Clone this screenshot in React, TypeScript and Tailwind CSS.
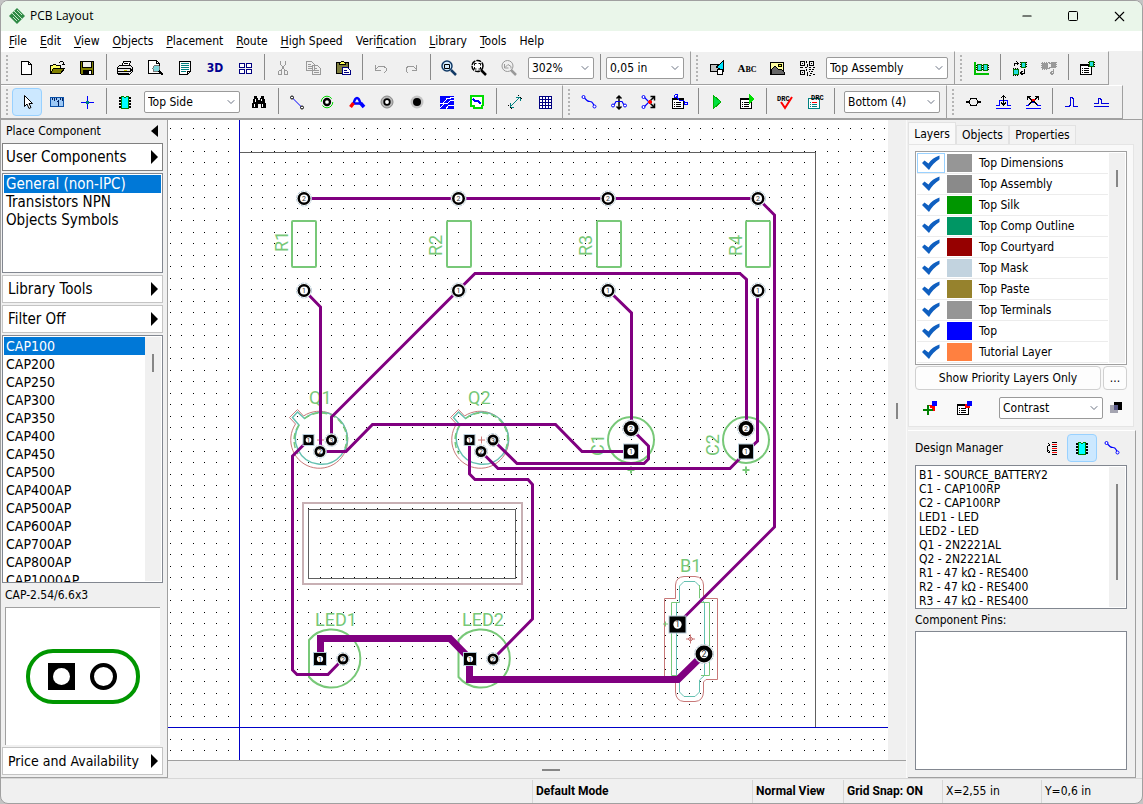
import { useState } from "react";
import type { ReactNode } from "react";
import { Minus, Square, X, ChevronDown } from "lucide-react";

const uiFont = "font-['DejaVu_Sans_Condensed','Noto_Sans',sans-serif]";

/* ---------- icons ---------- */

function Ico({ children, soft }: { children: ReactNode; soft?: boolean }) {
  return (
    <svg
      viewBox="0 0 18 18"
      className="w-[18px] h-[18px] shrink-0"
      fill="none"
      stroke="#000"
      shapeRendering={soft ? "auto" : "crispEdges"}
      aria-hidden="true"
    >
      {children}
    </svg>
  );
}

const icons: Record<string, ReactNode> = {
  new: (
    <Ico>
      <path d="M3.5 2.5h7l3 3v10h-10z" fill="#fff" />
      <path d="M10.5 2.5v3h3" />
    </Ico>
  ),
  open: (
    <Ico>
      <path d="M2.5 14.5v-8h2l1-1h2l1 1h4v3" fill="#ffff66" />
      <path d="M2.5 14.5l3-5h11l-4 5z" fill="#808000" />
      <path d="M10.5 3.5h1l1-1h2l1 1v2M13.5 5.5h3" />
    </Ico>
  ),
  save: (
    <Ico>
      <path d="M2.5 2.5h13v13h-12l-1-1z" fill="#808000" />
      <path d="M4.5 2.5h9v6h-9z" fill="#efefef" />
      <path d="M5 11h8v4H5z" fill="#000" />
      <path d="M11 12h1v2h-1z" stroke="#fff" />
    </Ico>
  ),
  print: (
    <Ico>
      <path d="M5.5 7.5l2-5h7l-2 5z" fill="#fff" />
      <path d="M1.5 8.5l2-2h11l2 2v4l-3 3h-11l-1-2z" fill="#e8e8e8" />
      <path d="M8 4.5h4M7 6.5h4M2 9.5h12M2 12.5h12l2-2M3 14.5h10M14.5 9v4" />
      <path d="M8 11h3" stroke="#cccc00" />
    </Ico>
  ),
  preview: (
    <Ico>
      <path d="M2.5 1.5h8l3 3v10h-11z" fill="#fff" />
      <path d="M10.5 1.5v3h3" />
      <circle cx="10.5" cy="9.5" r="3.5" fill="#7fd6dc" stroke="#777" />
      <path d="M13 12l4 4" strokeWidth="2" />
    </Ico>
  ),
  report: (
    <Ico>
      <path d="M3.5 2.5h11v10l-3 3h-8z" fill="#fff" />
      <path d="M5 4.5h8M5 6.5h8M5 8.5h8M5 10.5h8" stroke="#008080" />
      <path d="M5 12.5h5" stroke="#008080" />
      <path d="M11.5 15.5v-3h3" />
    </Ico>
  ),
  panels: (
    <Ico>
      <path d="M3.5 4.5h5v4h-5zM10.5 4.5h5v4h-5zM3.5 10.5h5v4h-5zM10.5 10.5h5v4h-5z" fill="#fff" stroke="#000080" />
    </Ico>
  ),
  cut: (
    <Ico>
      <path d="M6.5 2v3l4 6M11.5 2v3l-4 6" stroke="#999" />
      <path d="M5.5 11.5h2v4h-3v-3zM10.5 11.5h2l1 1v3h-3z" stroke="#999" />
    </Ico>
  ),
  copy: (
    <Ico>
      <path d="M2.5 2.5h5l3 3v6h-8zM8.5 6.5h5l3 3v6h-8z" fill="#efefef" stroke="#999" />
      <path d="M4 5.5h3M4 7.5h4M4 9.5h4M10 9.5h3M10 11.5h5M10 13.5h5" stroke="#999" />
    </Ico>
  ),
  paste: (
    <Ico>
      <path d="M2.5 3.5h12v11h-12z" fill="#7d7d3c" />
      <path d="M5.5 4.5l2-2h2l2 2v1h-6z" fill="#ffff55" />
      <path d="M8.5 8.5h5l3 3v4h-8z" fill="#fff" stroke="#000080" />
      <path d="M10 11.5h3M10 13.5h5" stroke="#000080" />
    </Ico>
  ),
  undo: (
    <Ico>
      <path d="M3.5 6v5h5M4 10l3-3h4l3 2v3l-2 2" stroke="#999" />
    </Ico>
  ),
  redo: (
    <Ico>
      <path d="M14.5 6v5h-5M14 10l-3-3H7L4 9v3l2 2" stroke="#999" />
    </Ico>
  ),
  zoomWin: (
    <Ico soft>
      <circle cx="7" cy="7" r="5" fill="#d4ecff" stroke="#123a66" strokeWidth="1.5" />
      <path d="M4.5 5.5h5v4h-5z" />
      <path d="M11 11l5 5" stroke="#123a66" strokeWidth="2.5" />
    </Ico>
  ),
  zoomFit: (
    <Ico soft>
      <circle cx="7.5" cy="7" r="5.5" strokeDasharray="5 1" fill="#fff" strokeWidth="1.5" />
      <path d="M4.5 6.5v-2h2M8.5 4.5h2v2M10.5 8v2h-2M6.5 10h-2V8" />
      <path d="M11 11l5 5" strokeWidth="2.5" />
    </Ico>
  ),
  zoomPrev: (
    <Ico soft>
      <circle cx="7.5" cy="7" r="5.5" stroke="#999" />
      <path d="M4.5 5v4h4M5 8.5l3-3 3 2v2" stroke="#999" />
      <path d="M11 11l5 5" stroke="#999" strokeWidth="2.5" />
    </Ico>
  ),
  shapes: (
    <Ico>
      <path d="M2.5 5.5h9v7h-9z" fill="#c0c0c0" />
      <path d="M15.5 2v10l-7-4z" fill="#00e5ff" />
      <circle cx="12" cy="13" r="3" fill="#fff" />
    </Ico>
  ),
  picture: (
    <Ico>
      <path d="M2.5 3.5h13v12h-13z" fill="#ffffa0" />
      <circle cx="12" cy="6.5" r="1.5" fill="#ffff00" />
      <path d="M3 15v-4l4-4 4 4 2-1 3 3v2z" fill="#666" />
    </Ico>
  ),
  qr: (
    <Ico>
      <path d="M2.5 2.5h4v4h-4zM11.5 2.5h4v4h-4zM2.5 11.5h4v4h-4z" />
      <path d="M4 4.5h1M13 4.5h1M4 13.5h1M8.5 2v2M9.5 5v3M2 8.5h3M7 8.5h2M11 8.5h2M15 8.5h2M8.5 10v2M9.5 13v4M11 10.5h2M14 10.5h2M11 12.5h1M13 12.5h2M12 14.5h2M11 16.5h2M15 15.5h2" />
    </Ico>
  ),
  placeAxis: (
    <Ico>
      <path d="M3 3v12h14" stroke="#00c000" strokeWidth="2" />
      <path d="M5.5 5.5h4v6h-4zM11.5 5.5h4v6h-4z" fill="#20e0e0" stroke="#008000" />
      <path d="M4.5 6v6M10.5 6v6M16.5 6v6" strokeDasharray="1 1" />
    </Ico>
  ),
  swap: (
    <Ico>
      <path d="M11.5 3.5h4v5h-4zM3.5 10.5h5v5h-5z" fill="#20e0e0" stroke="#007000" />
      <path d="M10.5 3v6M16.5 3v6M3 9.5h6M3 16.5h6" strokeDasharray="1 1" />
      <path d="M4.5 7V4.5H8M6.5 2.5l2 2-2 2M14.5 10v4H11M12.5 12l-2 2 2 2" />
    </Ico>
  ),
  swapOff: (
    <Ico>
      <path d="M2.5 4.5h5v5h-5zM11.5 3.5h4v5h-4z" fill="#999" stroke="#999" />
      <path d="M1.5 4v6M2 3.5h6M2 10.5h6M16.5 3v6" stroke="#999" strokeDasharray="1 1" />
      <path d="M8.5 3l2 2M8.5 10l2-2M13.5 10v4H11M12.5 12l-2 2 2 2" stroke="#999" />
    </Ico>
  ),
  listChip: (
    <Ico>
      <path d="M2.5 5.5h11v10h-11z" fill="#fff" />
      <path d="M2 6h11" strokeWidth="2" />
      <path d="M4 9.5h1M6 9.5h5M4 11.5h1M6 11.5h5M4 13.5h1M6 13.5h5" />
      <path d="M11.5 2.5h4v5h-4z" fill="#20e0e0" stroke="#007000" />
      <path d="M10.5 3v5M16.5 3v5" strokeDasharray="1 1" />
    </Ico>
  ),
  cursor: (
    <Ico soft>
      <path d="M6.5 2.5v11l2.5-2.5 2 4.5 2-1-2-4h3.5z" fill="#fff" />
    </Ico>
  ),
  measure: (
    <Ico>
      <path d="M2.5 4.5h13v9h-13z" fill="#9cc8f5" stroke="#0a50a8" />
      <path d="M4.5 5v2M6.5 5v3M8.5 5v2M12.5 5v2M14.5 5v3M9.5 9l1-1v5" stroke="#002060" />
    </Ico>
  ),
  origin: (
    <Ico>
      <path d="M9.5 3v13M3 9.5h13" stroke="#0000ff" />
      <path d="M8 8h3v3H8z" fill="#008080" stroke="none" />
    </Ico>
  ),
  chip: (
    <Ico>
      <path d="M3 5h12M3 8h12M3 11h12M3 14h12" strokeWidth="2" />
      <path d="M5.5 3.5h2l1 1h1l1-1h2v12h-7z" fill="#00ffff" stroke="#008000" />
    </Ico>
  ),
  find: (
    <Ico>
      <path d="M4 3h3v2h1v2h2V5h1V3h3v3h1v3l1 2v4h-5v-4H8v4H2v-4l1-2V6h1z" fill="#000" stroke="none" />
      <path d="M4.5 11v3M5.5 6v3M12.5 11v3M11.5 6v2" stroke="#fff" />
    </Ico>
  ),
  trace: (
    <Ico soft>
      <path d="M4 4.5l10 10" stroke="#0000ff" />
      <circle cx="4" cy="4.5" r="1.5" fill="#fff" />
      <circle cx="14" cy="14.5" r="1.5" fill="#fff" />
    </Ico>
  ),
  viaGreen: (
    <Ico soft>
      <circle cx="9" cy="9" r="5.8" stroke="#00d800" strokeDasharray="14 4" />
      <circle cx="9" cy="9" r="3" fill="#fff" strokeWidth="2.3" />
    </Ico>
  ),
  arc: (
    <Ico soft>
      <path d="M5.5 10.5Q7 5 9 5t3.5 5.5M6 10.5h6" stroke="#0000ff" strokeWidth="2.5" />
      <path d="M5.5 10l-3 4" stroke="#ff0000" strokeWidth="3.5" />
      <path d="M12.5 10l3.5 4" stroke="#0000ff" strokeWidth="3.5" />
    </Ico>
  ),
  viaGray: (
    <Ico soft>
      <circle cx="9" cy="9" r="6" fill="#b8b8b8" stroke="#888" />
      <circle cx="9" cy="9" r="2.8" fill="#fff" strokeWidth="1.8" />
    </Ico>
  ),
  viaSolid: (
    <Ico soft>
      <circle cx="9" cy="9" r="6.5" fill="#c4c4c4" stroke="none" />
      <circle cx="9" cy="9" r="4" fill="#000" stroke="none" />
    </Ico>
  ),
  pour: (
    <Ico>
      <path d="M2 3h14v13H2z" fill="#0000ff" stroke="none" />
      <path d="M2 10.5h3l4-5h3l1-1h3M2 15l5-5h3l3-3h3M8 16l3-4h5" stroke="#fff" />
    </Ico>
  ),
  region: (
    <Ico>
      <path d="M3 3h12v9l-1 1v2H6v-2H3z" fill="#fff" stroke="#00dd00" strokeWidth="2" />
      <path d="M5 6l2 2h3l3 3" stroke="#0000ff" strokeWidth="2" />
    </Ico>
  ),
  dimension: (
    <Ico>
      <path d="M4 14L14 4M4 10v4h4M10 4h4v4" stroke="#008080" />
      <path d="M2 12l4 4M12 2l4 4" strokeDasharray="2 1" />
    </Ico>
  ),
  table: (
    <Ico>
      <path d="M3 3h13v13H3z" fill="#fff" stroke="none" />
      <path d="M3 3.5h13M3 6.5h13M3 9.5h13M3 12.5h13M3 15.5h13M3.5 3v13M6.5 3v13M9.5 3v13M12.5 3v13M15.5 3v13" stroke="#000080" />
    </Ico>
  ),
  net: (
    <Ico soft>
      <path d="M4.5 5L7 7.5q1 1 3 1t3 2l1 2" stroke="#0000ff" strokeWidth="1.2" />
      <circle cx="3.5" cy="4" r="1.5" stroke="#0000ff" fill="#fff" />
      <circle cx="14.5" cy="13.5" r="1.5" stroke="#0000ff" fill="#fff" />
    </Ico>
  ),
  netUp: (
    <Ico soft>
      <path d="M9 3v13M6.5 5.5L9 3l2.5 2.5M6.5 13.5L9 16l2.5-2.5" strokeWidth="1.5" />
      <path d="M4 12l2-3.5h6l2 3.5" stroke="#0000ff" strokeWidth="1.2" />
      <circle cx="3" cy="12.5" r="1.5" stroke="#0000ff" fill="#fff" />
      <circle cx="15" cy="12.5" r="1.5" stroke="#0000ff" fill="#fff" />
    </Ico>
  ),
  netCut: (
    <Ico soft>
      <path d="M9 9l5 5M9 9l5-5M10.5 3.5h4v4M10.5 14.5h4v-4" strokeWidth="1.5" />
      <path d="M4 4l5 5-5 5" stroke="#0000ff" strokeWidth="1.2" />
      <path d="M8 9h4M10 7v4" stroke="#ff0000" strokeWidth="2" />
      <circle cx="3.5" cy="4" r="1.5" stroke="#0000ff" fill="#fff" />
      <circle cx="3.5" cy="14" r="1.5" stroke="#0000ff" fill="#fff" />
    </Ico>
  ),
  netList: (
    <Ico>
      <path d="M2.5 5.5h11v10h-11z" fill="#fff" />
      <path d="M2 6h11" strokeWidth="2" />
      <path d="M4 9.5h1M6 9.5h5M4 11.5h1M6 11.5h5M4 13.5h1M6 13.5h5" />
      <path d="M6 3l3 4h4l3 3" stroke="#0000ff" />
      <circle cx="6" cy="3" r="1.5" stroke="#0000ff" />
      <circle cx="16" cy="10.5" r="1.5" stroke="#0000ff" />
    </Ico>
  ),
  run: (
    <Ico>
      <path d="M5 2l8 7-8 7z" fill="#00e040" stroke="#00b000" />
    </Ico>
  ),
  runList: (
    <Ico>
      <path d="M2.5 5.5h11v10h-11z" fill="#fff" />
      <path d="M2 6h11" strokeWidth="2" />
      <path d="M4 9.5h1M6 9.5h5M4 11.5h1M6 11.5h5M4 13.5h1M6 13.5h5" />
      <path d="M11 1l6 5-6 5z" fill="#00e000" stroke="none" />
    </Ico>
  ),
  drc: (
    <Ico soft>
      <text x="1" y="8" fontSize="7" fontWeight="700" fontFamily="Liberation Mono, monospace" fill="#000" stroke="none">DRC</text>
      <path d="M5 9l4 6 7-11" stroke="#ff0000" strokeWidth="2" />
    </Ico>
  ),
  drcList: (
    <Ico>
      <path d="M2.5 5.5h11v10h-11z" fill="#fff" stroke="#008080" />
      <path d="M4 9.5h1M4 11.5h1M6 11.5h5M4 13.5h1M6 13.5h5" stroke="#008080" />
      <path d="M6 9.5h5" stroke="#ff0000" />
      <text x="5" y="7" fontSize="7" fontWeight="700" fontFamily="Liberation Mono, monospace" fill="#000" stroke="none">DRC</text>
    </Ico>
  ),
  pair: (
    <Ico>
      <path d="M2 8.5h3l2-3h5l2 3h3M2 9.5h3l2 3h5l2-3h3" />
    </Ico>
  ),
  pairUp: (
    <Ico>
      <path d="M2 12.5h3v-5h8v5h4M2 15.5h15" stroke="#0000ff" />
      <path d="M9.5 2v10M7 5l2.5-2.5L12 5M7 9.5l2.5 2.5 2.5-2.5" />
    </Ico>
  ),
  pairCut: (
    <Ico>
      <path d="M2 12.5h2l5-4 5 4h3M2 15.5h15" stroke="#0000ff" />
      <path d="M4 4l9 7M14 4l-9 7M3.5 7V3.5H7M11 3.5h3.5V7" strokeWidth="1.5" />
      <path d="M8 7h3" stroke="#ff0000" strokeWidth="2" />
    </Ico>
  ),
  tune: (
    <Ico>
      <path d="M3 13.5h4l1-1V5.5l1-1h1l1 1v7l1 1h4" stroke="#0000e0" />
    </Ico>
  ),
  tunePair: (
    <Ico>
      <path d="M2 10.5h4V6.5l1-1h1l1 1v3l1 1h7M2 13.5h15" stroke="#0000e0" />
    </Ico>
  ),
  plusLayer: (
    <Ico>
      <path d="M8 6h6v6H8z" fill="#ff0000" stroke="none" />
      <path d="M11 2h5v5h-5z" fill="#0000ff" stroke="none" />
      <path d="M7 7v8M3 11h8" stroke="#f9f9f9" strokeWidth="4" />
      <path d="M7 6v10M2 11h10" stroke="#008000" strokeWidth="2" />
    </Ico>
  ),
  layerList: (
    <Ico>
      <path d="M2.5 5.5h11v10h-11z" fill="#fff" />
      <path d="M2 6h8" strokeWidth="2" />
      <path d="M4 9.5h1M6 9.5h5M4 11.5h1M6 11.5h5M4 13.5h1M6 13.5h5" />
      <path d="M10 5h5v4h-5z" fill="#ff0000" stroke="none" />
      <path d="M12 2h5v5h-5z" fill="#0000ff" stroke="none" />
    </Ico>
  ),
  overlay: (
    <Ico>
      <path d="M8 3h8v8H8z" fill="#000" stroke="none" />
      <path d="M4 6h8v8H4z" fill="#a4a4b0" stroke="none" />
      <path d="M8 6h4v5H8z" fill="#5a5a8a" stroke="none" />
    </Ico>
  ),
  refresh: (
    <Ico>
      <path d="M9 3.5h5M9 7.5h5M9 11.5h5M9 15.5h5" />
      <path d="M9 5.5h5M9 9.5h5M9 13.5h5" stroke="#ff0000" />
      <path d="M7 6.5H5.5L4.500 8v4L5.500 13.5H7M5.500 4.500l2 2M5.500 11.500l2 2" />
    </Ico>
  ),
};

/* ---------- toolbar parts ---------- */

function Tool({ name, active }: { name: string; active?: boolean }) {
  return (
    <button
      aria-label={name}
      className={`w-[30px] h-7 shrink-0 flex items-center justify-center rounded-sm ${
        active ? "bg-[#cce8ff] border border-[#99d1ff]" : "hover:bg-[#e0eef9]"
      }`}
    >
      {name === "3D" ? (
        <span className="text-[12px] leading-4 font-bold text-[#000090]">3D</span>
      ) : name === "Abc" ? (
        <span className="text-[11px] leading-4 font-bold font-['Liberation_Serif',serif] [font-variant:small-caps]">Abc</span>
      ) : (
        icons[name]
      )}
    </button>
  );
}

function Sep() {
  return (
    <div className="w-2 h-7 shrink-0 flex justify-center">
      <div className="w-px h-[26px] bg-[#8a8a8a]" />
    </div>
  );
}

function Combo({ label, options, className }: { label: string; options: string[]; className: string }) {
  return (
    <div className={`relative shrink-0 h-[22px] ${className}`}>
      <select
        aria-label={label}
        className="block appearance-none w-full h-full bg-white border border-[#9a9a9a] rounded-xs pl-[3px] text-[12px] leading-4 outline-none"
      >
        {options.map((o) => (
          <option key={o}>{o}</option>
        ))}
      </select>
      <ChevronDown size={12} strokeWidth={2} className="absolute right-[3px] top-[5px] text-gray-500 pointer-events-none" />
    </div>
  );
}

function Strip({ children, tight }: { children: ReactNode; tight?: boolean }) {
  return (
    <div
      className={`flex items-center shrink-0 h-[34px] border-t border-t-white border-r border-r-[#a0a0a0] border-b border-b-[#a0a0a0] ${
        tight ? "pr-0.5" : "pr-1.5"
      }`}
    >
      <div className="w-[11px] flex justify-center">
        <div className="h-[26px] border-l-2 border-dotted border-[#b4b4b4]" />
      </div>
      {children}
    </div>
  );
}

/* ---------- board ---------- */

const PITCH = 11.525;
const dots = (() => {
  let d = "";
  for (let r = 0; r < 110; r++) {
    for (let c = 0; c < 180; c++) {
      d += `M${Math.floor(170.4 + c * PITCH)} ${Math.floor(128.3 + r * PITCH)}h1v1h-1z`;
    }
  }
  return d;
})();

const thin = [
  "304,198.5 758,198.5 774.5,215 774.5,527 677.5,624",
  "304,290 320.5,307 320.5,451",
  "741,273.5 475,273.5 331.5,417 331.5,440",
  "740,273.5 746.5,279.5 746.5,428",
  "608,290 631.5,313 631.5,428",
  "757.5,290 757.5,441 748,450",
  "320.5,451.5 346,451.5 372.5,424.5 555.5,424.5 582,451.5 631,451.5",
  "308.5,440 292.5,456 292.5,670 297,674.5 328,674.5 343,659",
  "493,440 517,463.5 644,463.5 648.5,459 648.5,446 631,428.5",
  "481,451.5 498,468.5 730,468.5 746,452",
  "469.5,440 469.5,474 475,479.5 528,479.5 532.5,484.5 532.5,619 493,659",
];
const thick = [
  "320.5,659 320.5,638.5 450,638.5 470,659",
  "469.5,659 469.5,679.5 678,679.5 704,654",
];

type PadSpec = [x: number, y: number, r: number, n: string, sq?: boolean];
const pads: PadSpec[] = [
  [304, 198.5, 6, "2"], [458.5, 198.5, 6, "2"], [608, 198.5, 6, "2"], [758, 198.5, 6, "2"],
  [304, 290.5, 6, "1"], [458.5, 290.5, 6, "1"], [608, 290.5, 6, "1"], [758, 290.5, 6, "1"],
  [308.5, 440, 5, "1", true], [320, 451.5, 5, "2"], [331.5, 440, 5, "3"],
  [469.5, 440, 5, "1", true], [481, 451.5, 5, "2"], [493, 440, 5, "3"],
  [631, 428.5, 7, "2"], [631, 451.5, 7, "1", true],
  [746, 428.5, 7, "2"], [746, 451.5, 7, "1", true],
  [320, 659, 6, "1", true], [343, 659, 5, "2"],
  [470, 659, 6, "1", true], [493, 659, 5, "2"],
  [677.5, 624.5, 8, "1", true], [704, 654, 8, "2"],
];

function Pad({ pad: [x, y, r, n, sq] }: { pad: PadSpec }) {
  const hole = r < 6 ? 2.8 : r === 6 && !sq ? 4 : r * 0.52;
  return (
    <g>
      {sq ? (
        <rect x={x - r - 0.5} y={y - r - 0.5} width={2 * r + 1} height={2 * r + 1} fill="#000" stroke="#b8ccd8" />
      ) : (
        <>
          <circle cx={x} cy={y} r={r + 1.5} fill="#fff" stroke="#b8ccd8" strokeDasharray="3 1" />
          <circle cx={x} cy={y} r={r + 0.5} fill="#000" />
        </>
      )}
      <circle cx={x} cy={y} r={hole} fill="#fff" />
      <text x={x} y={y + 2.5} fontSize={r > 7 ? 9 : 7} textAnchor="middle" fill="#333">
        {n}
      </text>
    </g>
  );
}

function Transistor({ dx }: { dx: number }) {
  return (
    <g transform={`translate(${dx} 0)`} fill="none">
      <path d="M303.500 416L297.500 409.500L289.500 417.500L295.500 424A28.500 28.500 0 1 0 303.500 416Z" stroke="#c87878" />
      <path d="M304.500 418.500L297.500 412L292.500 417.500L299 425A26 26 0 1 0 304.500 418.500Z" stroke="#64c0b0" strokeWidth="1.500" />
      <path d="M304.500 418.500A26 26 0 0 1 345 448M299 425A26 26 0 0 0 298 454" stroke="#78c878" strokeDasharray="6 3" strokeWidth="1.500" />
      <path d="M317 440h7M320.500 436.500v7" stroke="#c87878" />
    </g>
  );
}

function Board() {
  return (
    <svg
      viewBox="168 120 720 640"
      preserveAspectRatio="xMinYMin slice"
      className="block w-full h-full bg-white"
      fontFamily="Roboto, sans-serif"
    >
      <path d={dots} fill="#000" shapeRendering="crispEdges" />
      <g fill="none" shapeRendering="crispEdges">
        <path d="M240 152.5H815.5V727" stroke="#606060" />
        <path d="M239.5 0V2000M0 727.5H3000" stroke="#0000c8" />
        <rect x="303" y="503" width="219" height="81" stroke="#c8b0b4" strokeWidth="2" />
        <rect x="308.5" y="509.5" width="207" height="69" stroke="#606060" />
      </g>

      <g fill="none" stroke="#78c878" strokeWidth="2">
        {[292, 447, 597, 746].map((x) => (
          <rect key={x} x={x} y="221" width="24" height="46" rx="1" />
        ))}
        {[631, 746].map((x) => (
          <g key={x}>
            <circle cx={x} cy="440" r="23" />
            <path d={`M${x - 3.5} 470h7M${x} 466.500v7`} />
          </g>
        ))}
        {[0, 149.5].map((x) => (
          <path key={x} d="M309 640A29 29 0 1 1 309 677Z" transform={`translate(${x} 0)`} />
        ))}
      </g>

      <Transistor dx={0} />
      <Transistor dx={161} />

      {/* battery holder */}
      <g fill="none">
        <path
          d="M664.500 598.500H675.500V585Q676 577 684 576.500H695Q703 577 703.500 585V598.500H717.500V679.500H706L703.500 682V692Q703 701 695 701.500H684Q676 701 675.500 692V682L673 679.500H664.500Z"
          stroke="#c87878"
        />
        <path
          d="M676.500 602.500H679.500V586L684 581.500H695L699.500 586V598L704.500 602.500V675.500L699.500 680V692L695 696.500H684L679.500 692V675.500H676.500Z"
          stroke="#64c0b0"
        />
        <path d="M679 602.500H671.500V675.500H679M701 602.500H709.500V675.500H701M699.500 585V598" stroke="#78c878" />
        <path d="M686 639h9M690.500 634.500v9M688 639l2.500-2.500 2.500 2.500-2.500 2.500z" stroke="#c87878" />
        <path d="M663 624h5M665.500 621.500v5" stroke="#78c878" />
      </g>

      <g fill="#78c878" fontSize="18">
        <text transform="translate(288 252) rotate(-90)">R1</text>
        <text transform="translate(442 256) rotate(-90)">R2</text>
        <text transform="translate(592 256) rotate(-90)">R3</text>
        <text transform="translate(742 256) rotate(-90)">R4</text>
        <text transform="translate(604 456) rotate(-90)">C1</text>
        <text transform="translate(719 456) rotate(-90)">C2</text>
        <text x="309" y="404">Q1</text>
        <text x="468" y="404">Q2</text>
        <text x="315" y="626">LED1</text>
        <text x="462" y="626">LED2</text>
        <text x="680" y="572">B1</text>
      </g>

      <g fill="none" stroke="#800080" strokeWidth="3">
        {thin.map((p) => (
          <polyline key={p} points={p} />
        ))}
      </g>
      <g fill="none" stroke="#800080" strokeWidth="7">
        {thick.map((p) => (
          <polyline key={p} points={p} />
        ))}
      </g>
      {pads.map((p) => (
        <Pad key={`${p[0]}-${p[1]}`} pad={p} />
      ))}
    </svg>
  );
}

/* ---------- side panels ---------- */

const libraries = ["General (non-IPC)", "Transistors NPN", "Objects Symbols"];
const parts = [
  "CAP100", "CAP200", "CAP250", "CAP300", "CAP350", "CAP400", "CAP450", "CAP500",
  "CAP400AP", "CAP500AP", "CAP600AP", "CAP700AP", "CAP800AP", "CAP1000AP",
];

const layers = [
  { name: "Top Dimensions", color: "bg-[#969696]" },
  { name: "Top Assembly", color: "bg-[#8a8a8a]" },
  { name: "Top Silk", color: "bg-[#009600]" },
  { name: "Top Comp Outline", color: "bg-[#009664]" },
  { name: "Top Courtyard", color: "bg-[#960000]" },
  { name: "Top Mask", color: "bg-[#c2d3df]" },
  { name: "Top Paste", color: "bg-[#96822d]" },
  { name: "Top Terminals", color: "bg-[#969696]" },
  { name: "Top", color: "bg-[#0000ff]" },
  { name: "Tutorial Layer", color: "bg-[#ff8040]" },
];

const components = [
  "B1 - SOURCE_BATTERY2", "C1 - CAP100RP", "C2 - CAP100RP", "LED1 - LED", "LED2 - LED",
  "Q1 - 2N2221AL", "Q2 - 2N2221AL", "R1 - 47 kΩ - RES400", "R2 - 47 kΩ - RES400", "R3 - 47 kΩ - RES400",
];

function PanelButton({ label, strong, small }: { label: string; strong?: boolean; small?: boolean }) {
  return (
    <button
      className={`h-7 shrink-0 flex items-center justify-between bg-white border pr-1 leading-4 ${
        strong ? "pl-[3px] border-[#808080]" : "pl-[5px] border-[#c4c4c4]"
      } ${small ? "text-[14px]" : "text-[15px]"}`}
    >
      {label}
      <span className="border-y-[7px] border-y-transparent border-l-[7px] border-l-black" />
    </button>
  );
}

type PickListProps = { items: string[]; value: string; onPick: (v: string) => void; large?: boolean };

function PickList({ items, value, onPick, large }: PickListProps) {
  return (
    <ul className="flex-1 min-w-0">
      {items.map((item) => (
        <li key={item}>
          <button
            onClick={() => onPick(item)}
            className={`block w-full h-[18px] pl-0.5 text-left leading-[18px] whitespace-nowrap ${
              large ? "text-[15px]" : "text-[14px]"
            } ${item === value ? "bg-[#0078d7] text-white" : ""}`}
          >
            {item}
          </button>
        </li>
      ))}
    </ul>
  );
}

function LeftPanel() {
  const [library, setLibrary] = useState(libraries[0]);
  const [part, setPart] = useState(parts[0]);

  return (
    <aside className="w-[167px] shrink-0 flex flex-col gap-[2px] pl-px pr-1 pb-0.5 border-r border-b border-[#a0a0a0]">
      <button className="h-[21px] shrink-0 flex items-center justify-between pl-1 pr-[5px] text-[12px] leading-4">
        Place Component
        <span className="border-y-[6px] border-y-transparent border-r-[7px] border-r-black" />
      </button>
      <PanelButton label="User Components" strong />
      <div className="h-[100px] shrink-0 flex border border-[#828790] bg-white p-px">
        <PickList items={libraries} value={library} onPick={setLibrary} large />
      </div>
      <PanelButton label="Library Tools" />
      <PanelButton label="Filter Off" />
      <div className="flex-1 min-h-0 flex border border-[#828790] bg-white p-px overflow-hidden">
        <PickList items={parts} value={part} onPick={setPart} />
        <div className="w-4 shrink-0 bg-[#f0f0f0] flex justify-center pt-[17px]">
          <div className="w-0.5 h-[18px] bg-[#868686]" />
        </div>
      </div>
      <div className="h-5 shrink-0 pl-[3px] text-[12px] leading-5">CAP-2.54/6.6x3</div>
      <div className="h-[138px] shrink-0 mx-[3px] bg-white border-t border-l border-[#a0a0a0] flex items-center justify-center">
        <svg viewBox="0 0 114 56" className="w-[114px] h-14" fill="none">
          <rect x="2" y="2" width="110" height="51" rx="25" stroke="#009600" strokeWidth="4" />
          <rect x="22" y="14" width="27" height="27" fill="#000" />
          <circle cx="35.5" cy="27.5" r="8.5" fill="#fff" />
          <circle cx="77.5" cy="27.5" r="11.5" stroke="#000" strokeWidth="4" />
        </svg>
      </div>
      <PanelButton label="Price and Availability" small />
    </aside>
  );
}

function LayerRow({ name, color, first }: { name: string; color: string; first: boolean }) {
  return (
    <label className="flex items-center h-[21px] border-b border-[#ececec]">
      <span className={`relative w-7 h-5 flex items-center justify-center border ${first ? "border-[#99d1ff]" : "border-transparent"}`}>
        <input type="checkbox" defaultChecked className="peer appearance-none absolute inset-0" />
        <svg viewBox="0 0 20 18" className="w-5 h-[18px] invisible peer-checked:visible">
          <path d="M1 9l2.500-2.500 4 3Q11 4 18.500 1.500V5Q12 9 8 16z" fill="#0f5fc0" />
        </svg>
      </span>
      <span className={`ml-0.5 mr-[7px] w-[25px] h-[18px] ${color}`} />
      <span className="text-[12px] leading-4">{name}</span>
    </label>
  );
}

function RightPanel() {
  return (
    <aside className="w-[236px] shrink-0 flex flex-col pl-px pr-1.5 border-l border-[#fafafa]">
      <div className="flex items-end h-6 shrink-0 text-[12px] leading-4">
        <button className="h-[22px] w-12 bg-[#f9f9f9] border border-b-0 border-[#e2e2e2]">Layers</button>
        <button className="h-[19px] w-[53px] bg-[#f3f3f3] border border-b-0 border-[#e2e2e2]">Objects</button>
        <button className="h-[19px] w-[67px] bg-[#f3f3f3] border border-b-0 border-[#e2e2e2]">Properties</button>
      </div>
      <div className="shrink-0 mr-0.5 px-1.5 pt-1.5 bg-[#f9f9f9] border border-[#e5e5e5]">
        <div className="flex h-[214px] border border-[#a0a0a0] bg-white p-px overflow-hidden">
          <div className="flex-1 pr-px">
            {layers.map((l, i) => (
              <LayerRow key={l.name} name={l.name} color={l.color} first={i === 0} />
            ))}
          </div>
          <div className="w-4 shrink-0 bg-[#f0f0f0] flex justify-center pt-[17px]">
            <div className="w-0.5 h-[17px] bg-[#868686]" />
          </div>
        </div>
        <div className="flex gap-0.5 mt-px text-[12px] leading-4">
          <button className="flex-1 h-6 bg-[#fdfdfd] border border-[#d0d0d0] rounded">Show Priority Layers Only</button>
          <button className="w-6 h-6 bg-[#fdfdfd] border border-[#d0d0d0] rounded">...</button>
        </div>
        <div className="flex items-center h-9">
          <Tool name="plusLayer" />
          <div className="ml-1"><Tool name="layerList" /></div>
          <Combo label="Layer display" options={["Contrast", "Normal"]} className="flex-1 ml-5" />
          <button aria-label="Overlay" className="w-6 flex justify-center">{icons.overlay}</button>
        </div>
      </div>
      <div className="flex-1 min-h-0 flex flex-col mt-[3px] pl-[7px] pr-2 pb-[7px] border-t border-t-white border-r border-r-[#a0a0a0] border-b border-b-[#a0a0a0]">
        <div className="flex items-center h-[34px] shrink-0">
          <h2 className="flex-1 text-[12px] leading-4">Design Manager</h2>
          <Tool name="refresh" />
          <Tool name="chip" active />
          <Tool name="net" />
        </div>
        <div className="flex h-36 shrink-0 border border-[#828790] bg-white p-px overflow-hidden">
          <ul className="flex-1 pt-px pl-0.5 text-[12px] leading-[14px]">
            {components.map((c) => (
              <li key={c}>{c}</li>
            ))}
          </ul>
          <div className="w-4 shrink-0 bg-[#f0f0f0] flex justify-center pt-[17px]">
            <div className="w-0.5 h-24 bg-[#868686]" />
          </div>
        </div>
        <div className="h-[22px] shrink-0 text-[12px] leading-[22px]">Component Pins:</div>
        <div className="flex-1 border border-[#828790] bg-white" />
      </div>
    </aside>
  );
}

/* ---------- window ---------- */

const menus = ["File", "Edit", "View", "Objects", "Placement", "Route", "High Speed", "Verification", "Library", "Tools", "Help"];
const accelAt: Record<string, number> = { Verification: 4 };

function MenuItem({ text }: { text: string }) {
  const k = accelAt[text] ?? 0;
  return (
    <button className="whitespace-nowrap">
      {text.slice(0, k)}
      <span className={text === "Help" ? "" : "underline underline-offset-2"}>{text[k]}</span>
      {text.slice(k + 1)}
    </button>
  );
}

export default function App() {
  return (
    <div className="h-screen bg-[#c4c4c4] overflow-hidden">
      <div className={`h-full flex flex-col bg-[#f0f0f0] text-black border border-[#a0a0a0] rounded-lg overflow-hidden ${uiFont}`}>
        <header className="h-[30px] shrink-0 flex items-center pl-2 bg-[#eaf6ea]">
          <svg viewBox="0 0 16 16" className="w-4 h-4" aria-hidden="true">
            <path d="M8 0l8 8-8 8-8-8z" fill="#2f8a45" />
            <path d="M3 5l7 7M5 3l8 8M4 9l4 4M8 2l5 5" stroke="#d8f0d8" strokeWidth="0.9" />
          </svg>
          <h1 className="ml-[5px] flex-1 text-[12px] leading-4 font-['Open_Sans',sans-serif]">PCB Layout</h1>
          <button aria-label="Minimize" className="w-[46px] flex justify-center"><Minus size={14} strokeWidth={2} /></button>
          <button aria-label="Maximize" className="w-[46px] flex justify-center"><Square size={12} strokeWidth={2} /></button>
          <button aria-label="Close" className="w-[46px] flex justify-center"><X size={17} strokeWidth={1.5} /></button>
        </header>

        <nav className="h-5 shrink-0 flex items-center gap-[13px] pl-2 bg-white text-[12px] leading-4">
          {menus.map((m) => (
            <MenuItem key={m} text={m} />
          ))}
        </nav>

        <div className="shrink-0 border-b border-[#a0a0a0]">
          <div className="flex">
            <Strip>
              <Tool name="new" /><Tool name="open" /><Tool name="save" />
              <Sep />
              <Tool name="print" /><Tool name="preview" /><Tool name="report" /><Tool name="3D" /><Tool name="panels" />
              <Sep />
              <Tool name="cut" /><Tool name="copy" /><Tool name="paste" />
              <Sep />
              <Tool name="undo" /><Tool name="redo" />
              <Sep />
              <Tool name="zoomWin" /><Tool name="zoomFit" /><Tool name="zoomPrev" />
              <Combo label="Zoom" options={["302%", "100%"]} className="w-[66px] ml-1" />
              <div className="w-3 flex justify-center"><Sep /></div>
              <Combo label="Grid size" options={["0,05 in", "0,1 in"]} className="w-[78px]" />
            </Strip>
            <Strip>
              <Tool name="shapes" /><Tool name="Abc" /><Tool name="picture" /><Tool name="qr" />
              <Combo label="Drawing layer" options={["Top Assembly", "Top Silk"]} className="w-[122px] ml-1" />
            </Strip>
            <Strip>
              <Tool name="placeAxis" />
              <Sep />
              <Tool name="swap" /><Tool name="swapOff" />
              <Sep />
              <Tool name="listChip" />
            </Strip>
          </div>
          <div className="flex">
            <Strip tight>
              <Tool name="cursor" active /><Tool name="measure" /><Tool name="origin" />
              <Sep />
              <Tool name="chip" />
              <Combo label="Side" options={["Top Side", "Bottom Side"]} className="w-[96px] ml-1 mr-1" />
              <Tool name="find" />
              <Sep />
              <Tool name="trace" /><Tool name="viaGreen" /><Tool name="arc" /><Tool name="viaGray" /><Tool name="viaSolid" /><Tool name="pour" /><Tool name="region" />
              <Sep />
              <Tool name="dimension" /><Tool name="table" />
            </Strip>
            <Strip>
              <Tool name="net" /><Tool name="netUp" /><Tool name="netCut" /><Tool name="netList" />
              <Sep />
              <Tool name="run" /><Tool name="runList" />
              <Sep />
              <Tool name="drc" /><Tool name="drcList" />
              <Sep />
              <Combo label="Route layer" options={["Bottom (4)", "Top (1)"]} className="w-[96px] ml-1.5" />
            </Strip>
            <Strip>
              <Tool name="pair" /><Tool name="pairUp" /><Tool name="pairCut" />
              <Sep />
              <Tool name="tune" /><Tool name="tunePair" />
            </Strip>
          </div>
        </div>

        <main className="flex-1 min-h-0 flex">
          <LeftPanel />
          <div className="flex-1 min-w-0 flex flex-col">
            <div className="flex-1 min-h-0 flex">
              <div className="flex-1 min-w-0"><Board /></div>
              <div className="w-[18px] shrink-0 flex flex-col items-center">
                <div className="mt-[283px] w-0.5 h-4 bg-[#868686]" />
              </div>
            </div>
            <div className="h-[18px] shrink-0 flex items-center border-t border-[#a0a0a0]">
              <div className="ml-[374px] h-0.5 w-[18px] bg-[#868686]" />
            </div>
          </div>
          <RightPanel />
        </main>

        <footer className="h-[25px] shrink-0 flex items-center justify-end border-t border-[#d7d7d7] text-[12px] leading-[23px]">
          <div className="w-[220px] pl-[3px] border-l border-[#d7d7d7] font-bold font-['Roboto',sans-serif]">Default Mode</div>
          <div className="w-[91px] pl-[3px] border-l border-[#d7d7d7] font-bold font-['Roboto',sans-serif]">Normal View</div>
          <div className="w-[99px] pl-[3px] border-l border-[#d7d7d7] font-bold font-['Roboto',sans-serif]">Grid Snap: ON</div>
          <div className="w-[99px] pl-[3px] border-l border-[#d7d7d7]">X=2,55 in</div>
          <div className="w-[101px] pl-[3px] border-l border-[#d7d7d7]">Y=0,6 in</div>
        </footer>
      </div>
    </div>
  );
}
